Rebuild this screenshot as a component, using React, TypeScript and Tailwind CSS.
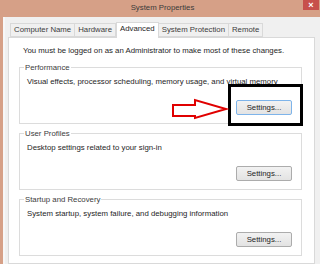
import React from "react";

const tabs = ["Computer Name", "Hardware", "Advanced", "System Protection", "Remote"];

const groups = [
  {
    title: "Performance",
    text: "Visual effects, processor scheduling, memory usage, and virtual memory",
    focused: true,
  },
  {
    title: "User Profiles",
    text: "Desktop settings related to your sign-in",
    focused: false,
  },
  {
    title: "Startup and Recovery",
    text: "System startup, system failure, and debugging information",
    focused: false,
  },
];

const Group = ({ title, text, focused }: { title: string; text: string; focused: boolean }) => {
  return (
    <fieldset className="border border-[#dcdcdc] h-[61px] px-[7px]">
      <legend className="ml-[-3px] px-[1px] text-[#3c3c3c] leading-[9px]">{title}</legend>
      <p className="mt-[5px] text-[#1e1e1e] leading-[10px]">{text}</p>
      <div className="flex justify-end mt-[13px] pr-[2px]">
        <button
          className={`w-[56px] h-[15px] rounded-[2px] border bg-gradient-to-b from-[#f2f2f2] to-[#e3e3e3] text-[#1e1e1e] leading-[13px] ${
            focused ? "border-[#7eb4ea]" : "border-[#acacac]"
          }`}
        >
          Settings...
        </button>
      </div>
    </fieldset>
  );
};

export default function App() {
  return (
    <div className="relative w-[320px] h-[264px] overflow-hidden bg-[#d6a087] text-[7.8px] font-['Liberation_Sans',Arial,sans-serif] flex flex-col">
      {/* title bar */}
      <div className="h-[17px] flex items-start">
        <div className="flex-1 text-center pt-[3px] text-[#3a3a3a] leading-[10px] pl-[22px]">System Properties</div>
        <div className="w-[16px] h-[10px] mr-[1px] bg-[#c7504b] flex items-center justify-center text-white text-[9px] leading-none font-bold">
          ×
        </div>
      </div>

      {/* body */}
      <div className="flex-1 flex pl-[3px]">
        <div className="flex-1 bg-[#f0f0f0] border-l-2 border-[#f7f7f7] pl-[3px] pt-[4px] flex flex-col">
          <div className="flex items-end h-[16px] pl-[2px] relative z-10">
            {tabs.map((t) =>
              t === "Advanced" ? (
                <div
                  key={t}
                  className="h-[16px] px-[3px] bg-white border border-b-0 border-[#d9d9d9] text-[#1e1e1e] leading-[12px] -mb-[1px]"
                >
                  {t}
                </div>
              ) : (
                <div
                  key={t}
                  className="h-[14px] px-[3px] bg-[#f0f0f0] border border-[#d9d9d9] -ml-[1px] first:ml-0 text-[#3c3c3c] leading-[12px]"
                >
                  {t}
                </div>
              )
            )}
          </div>
          <div className="w-[307px] flex-1 bg-white border border-[#d9d9d9] pl-[10px] pt-[8px] flex flex-col">
            <p className="pl-[4px] text-[#1e1e1e] leading-[10px]">
              You must be logged on as an Administrator to make most of these changes.
            </p>
            <div className="mt-[7px] w-[283px] flex flex-col gap-[5px]">
              {groups.map((g) => (
                <Group key={g.title} {...g} />
              ))}
            </div>
          </div>
        </div>
      </div>

      {/* annotation: highlight box + arrow */}
      <div className="absolute left-[228px] top-[84px] w-[75px] h-[42px] border-[3px] border-black" />
      <svg className="absolute left-0 top-0" width="320" height="264" viewBox="0 0 320 264">
        <polygon
          points="173,105 195,105 195,100 226,109 195,118 195,116 173,116"
          fill="white"
          stroke="#e00000"
          strokeWidth="2"
          strokeLinejoin="miter"
        />
      </svg>
    </div>
  );
}
